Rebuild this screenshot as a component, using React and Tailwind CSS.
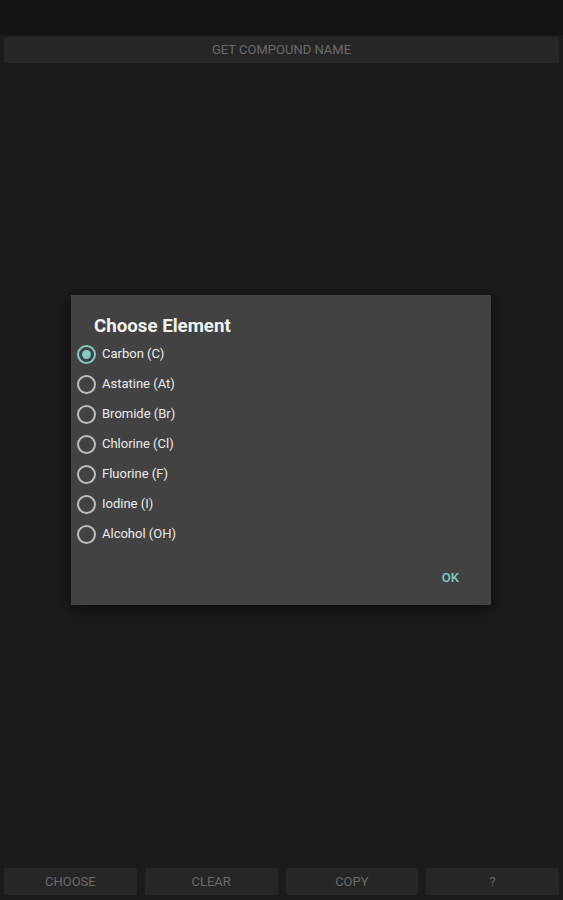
const elements = [
  'Carbon (C)',
  'Astatine (At)',
  'Bromide (Br)',
  'Chlorine (Cl)',
  'Fluorine (F)',
  'Iodine (I)',
  'Alcohol (OH)',
]

function Radio({ checked }) {
  return (
    <span className={`flex h-[19px] w-[19px] items-center justify-center rounded-full border-2 ${checked ? 'border-[#80cbc4]' : 'border-[#bdbdbd]'}`}>
      {checked && <span className="h-[9px] w-[9px] rounded-full bg-[#80cbc4]" />}
    </span>
  )
}

export default function App() {
  const font = { fontFamily: 'Roboto, "Liberation Sans", sans-serif' }
  return (
    <div className="relative flex h-[900px] w-[563px] flex-col bg-[#1b1b1b]" style={font}>
      <div className="h-[35px] bg-[#141414]" />
      <div className="px-[4px] pt-[2px]">
        <div className="flex h-[26px] items-center justify-center rounded-[2px] bg-[#262626] text-[13px] text-[#6b6b6b]">
          GET COMPOUND NAME
        </div>
      </div>
      <div className="flex-1" />
      <div className="grid grid-cols-4 gap-[8px] px-[4px] pb-[5px] pt-[5px]">
        {['CHOOSE', 'CLEAR', 'COPY', '?'].map((t) => (
          <div key={t} className="flex h-[27px] items-center justify-center rounded-[2px] bg-[#262626] text-[13px] text-[#6b6b6b]">
            {t}
          </div>
        ))}
      </div>

      <div className="absolute left-[71px] top-[295px] flex h-[310px] w-[420px] flex-col bg-[#424242] shadow-[0_4px_16px_rgba(0,0,0,0.6)]">
        <div className="pl-[23px] pt-[20px] text-[18.7px] font-bold leading-[22px] text-[#f2f2f2]">Choose Element</div>
        <div className="mt-[2px] flex flex-col">
          {elements.map((e, i) => (
            <div key={e} className="flex h-[30px] items-center gap-[6px] pl-[6px]">
              <Radio checked={i === 0} />
              <span className="text-[13px] text-[#ececec]">{e}</span>
            </div>
          ))}
        </div>
        <div className="mt-[19px] flex justify-end pr-[32px]">
          <span className="text-[13px] font-medium text-[#80cbc4]">OK</span>
        </div>
      </div>
    </div>
  )
}
